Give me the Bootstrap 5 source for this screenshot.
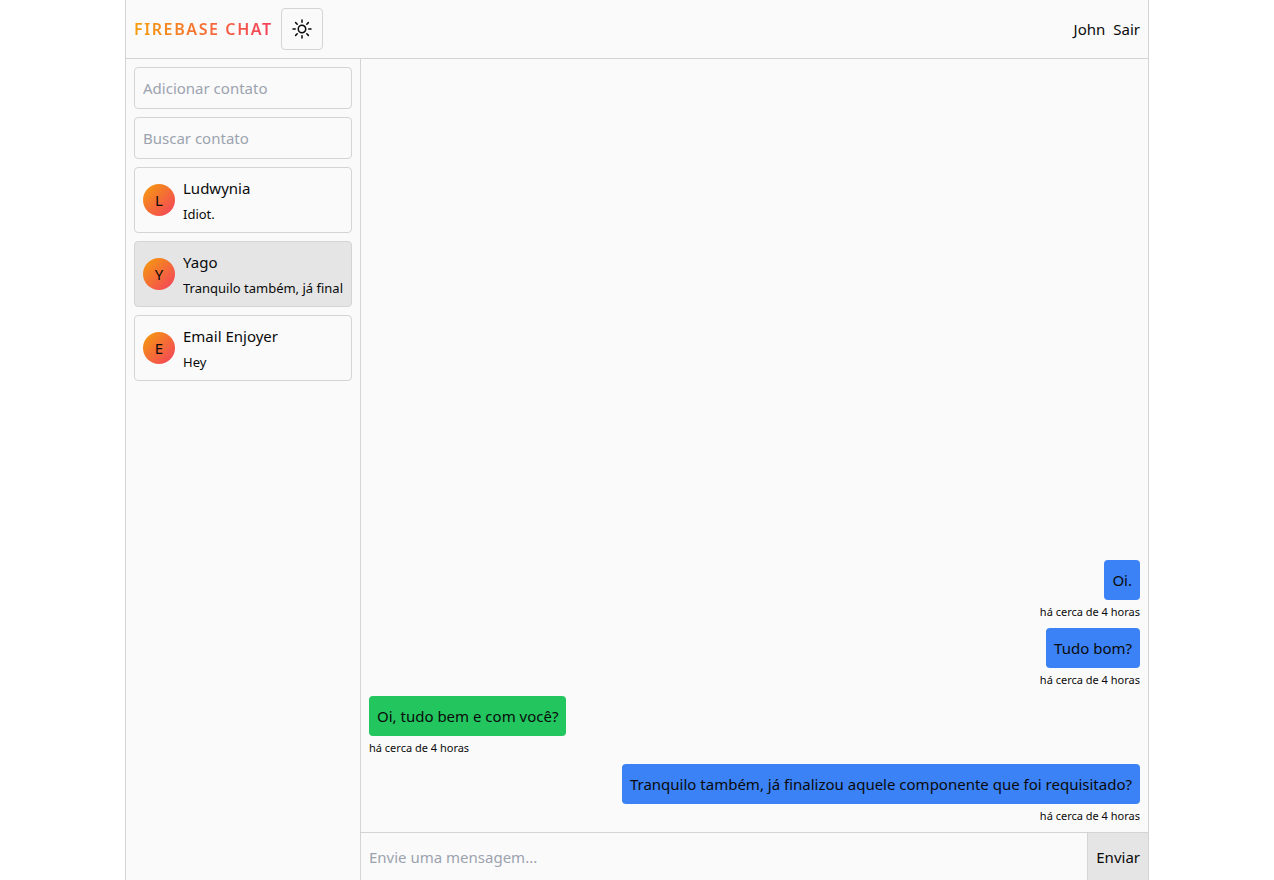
<!DOCTYPE html>
<html lang="pt-BR">
<head>
<meta charset="utf-8">
<meta name="viewport" content="width=device-width, initial-scale=1">
<title>Firebase Chat</title>
<link href="https://cdn.jsdelivr.net/npm/bootstrap@5.3.0/dist/css/bootstrap.min.css" rel="stylesheet">
<style>
  :root { --line: #d4d4d4; --surface: #fafafa; --raised: #e5e5e5; --warm: #f59e0b, #f43f5e; }
  body { font-family: "Noto Sans", sans-serif; font-size: 15px; line-height: 24px; color: #0a0a0a; background: #fff; }
  a { color: inherit; text-decoration: none; }
  a:hover { color: inherit; }
  .app { max-width: 1024px; background: var(--surface); border: solid var(--line); border-width: 0 1px; }
  .line-bottom { border-bottom: 1px solid var(--line); }
  .brand { font-size: 16px; line-height: 24px; font-weight: 600; letter-spacing: 0.1em; background: linear-gradient(to right, var(--warm)); -webkit-background-clip: text; background-clip: text; color: transparent; }
  .boxed { border: 1px solid var(--line); border-radius: 4px; background: transparent; color: inherit; }
  .theme-btn svg { width: 24px; height: 24px; }
  .sidebar { width: 235px; border-right: 1px solid var(--line); }
  .field { height: 42px; padding: 8px; }
  input { color: inherit; }
  input::placeholder { color: #9ca3af; opacity: 1; }
  .contact.active { background: var(--raised); }
  .avatar { width: 32px; height: 32px; background: linear-gradient(to bottom right, var(--warm)); }
  .preview { font-size: 13px; line-height: 20px; }
  .bubble { border-radius: 4px; background: #3b82f6; }
  .received .bubble { background: #22c55e; }
  .stamp { font-size: 11px; line-height: 16px; }
  .composer { height: 48px; border-top: 1px solid var(--line); }
  .composer input { background: transparent; border: 0; min-width: 0; }
  .send { border: 0; border-left: 1px solid var(--line); background: var(--raised); color: inherit; }
</style>
</head>
<body>
<div class="app container-fluid vh-100 p-0 d-flex flex-column">
  <header class="line-bottom d-flex align-items-center justify-content-between p-2">
    <div class="d-flex align-items-center gap-2">
      <h1 class="brand text-uppercase m-0">Firebase Chat</h1>
      <button type="button" class="boxed theme-btn p-2 d-flex" aria-label="Alternar tema">
        <svg viewBox="0 0 24 24" fill="none" stroke="currentColor" stroke-width="1.5" stroke-linecap="round" stroke-linejoin="round" aria-hidden="true"><path d="M12 3v2.25m6.364.386-1.591 1.591M21 12h-2.25m-.386 6.364-1.591-1.591M12 18.75V21m-4.773-4.227-1.591 1.591M5.25 12H3m4.227-4.773L5.636 5.636M15.75 12a3.75 3.75 0 1 1-7.5 0 3.75 3.75 0 0 1 7.5 0Z"/></svg>
      </button>
    </div>
    <nav class="d-flex gap-2"><span>John</span><a href="#">Sair</a></nav>
  </header>
  <div class="d-flex flex-grow-1 overflow-hidden">
    <aside class="sidebar flex-shrink-0 d-flex flex-column gap-2 p-2">
      <input class="boxed field w-100" type="email" placeholder="Adicionar contato" aria-label="Adicionar contato">
      <input class="boxed field w-100" type="search" placeholder="Buscar contato" aria-label="Buscar contato">
      <a href="#" class="boxed contact d-flex align-items-center gap-2 p-2">
        <span class="avatar rounded-circle flex-shrink-0 d-flex align-items-center justify-content-center">L</span>
        <span class="d-flex flex-column gap-1 overflow-hidden text-nowrap"><span>Ludwynia</span><span class="preview">Idiot.</span></span>
      </a>
      <a href="#" class="boxed contact active d-flex align-items-center gap-2 p-2">
        <span class="avatar rounded-circle flex-shrink-0 d-flex align-items-center justify-content-center">Y</span>
        <span class="d-flex flex-column gap-1 overflow-hidden text-nowrap"><span>Yago</span><span class="preview">Tranquilo também, já finalizou</span></span>
      </a>
      <a href="#" class="boxed contact d-flex align-items-center gap-2 p-2">
        <span class="avatar rounded-circle flex-shrink-0 d-flex align-items-center justify-content-center">E</span>
        <span class="d-flex flex-column gap-1 overflow-hidden text-nowrap"><span>Email Enjoyer</span><span class="preview">Hey</span></span>
      </a>
    </aside>
    <main class="flex-grow-1 d-flex flex-column overflow-hidden">
      <div class="flex-grow-1 d-flex flex-column justify-content-end gap-2 p-2">
        <div class="d-flex flex-column align-items-end gap-1"><div class="bubble p-2">Oi.</div><time class="stamp">há cerca de 4 horas</time></div>
        <div class="d-flex flex-column align-items-end gap-1"><div class="bubble p-2">Tudo bom?</div><time class="stamp">há cerca de 4 horas</time></div>
        <div class="received d-flex flex-column align-items-start gap-1"><div class="bubble p-2">Oi, tudo bem e com você?</div><time class="stamp">há cerca de 4 horas</time></div>
        <div class="d-flex flex-column align-items-end gap-1"><div class="bubble p-2">Tranquilo também, já finalizou aquele componente que foi requisitado?</div><time class="stamp">há cerca de 4 horas</time></div>
      </div>
      <form class="composer d-flex">
        <input class="flex-grow-1 p-2" type="text" placeholder="Envie uma mensagem..." aria-label="Mensagem">
        <button type="button" class="send px-2">Enviar</button>
      </form>
    </main>
  </div>
</div>
<script src="https://cdn.jsdelivr.net/npm/bootstrap@5.3.0/dist/js/bootstrap.bundle.min.js"></script>
</body>
</html>
